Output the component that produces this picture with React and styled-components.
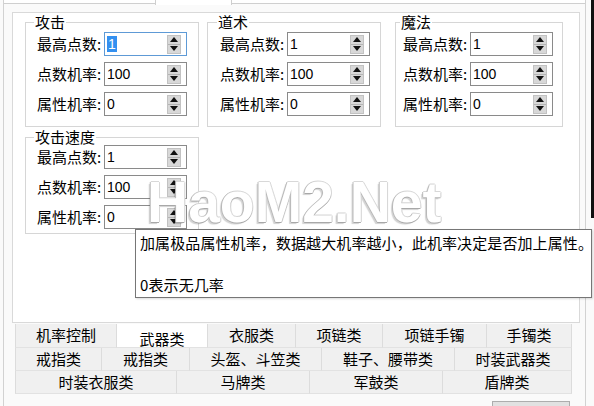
import React from 'react';
import styled, { createGlobalStyle } from 'styled-components';

const GlobalStyle = createGlobalStyle`
    html, body {
        margin: 0;
        padding: 0;
        width: 594px;
        height: 406px;
        overflow: hidden;
        background: #fafafa;
    }
    body {
        font-family: "Noto Sans CJK SC", "Liberation Sans", sans-serif;
        color: #000;
    }
`;

const Screen = styled.div`
    position: relative;
    width: 594px;
    height: 406px;
    display: flex;
    overflow: hidden;
    background: #fafafa;
`;

const Frame = styled.div`
    margin-left: 3px;
    width: 583px;
    box-sizing: border-box;
    border-left: 1px solid #d2d2d2;
    border-right: 1px solid #d2d2d2;
    display: flex;
    flex-direction: column;
    flex-shrink: 0;
    & > * {
        flex-shrink: 0;
    }
`;

const SideStrip = styled.div`
    flex: 1;
    display: flex;
    justify-content: flex-end;
    align-items: flex-start;
`;

const Dark = styled.div`
    width: 3px;
    height: 218px;
    background: #111;
`;

const TopStrip = styled.div`
    height: 12px;
    display: flex;
    align-items: flex-start;
`;

const TopLine = styled.div`
    width: ${(p) => (p.$w ? `${p.$w}px` : 'auto')};
    flex: ${(p) => (p.$w ? 'none' : '1')};
    height: 3px;
    border-bottom: 1px solid #cfcfcf;
    background: #fff;
`;

const TopNotch = styled.div`
    width: 77px;
    height: 5px;
    box-sizing: border-box;
    border-left: 1px solid #cfcfcf;
    border-right: 1px solid #cfcfcf;
    background: #fff;
`;

const Panel = styled.div`
    margin-left: 8px;
    width: 568px;
    height: 311px;
    box-sizing: border-box;
    border: 1px solid #d9d9d9;
    background: #fff;
    padding-left: 12px;
`;

const GroupRow = styled.div`
    display: flex;
    align-items: flex-start;
`;

const Group = styled.fieldset`
    margin: ${(p) => p.$mt}px 0 0 ${(p) => p.$ml}px;
    width: ${(p) => p.$w}px;
    box-sizing: border-box;
    border: 1px solid #d6d6d6;
    padding: ${(p) => p.$pt}px 0 ${(p) => p.$pb}px ${(p) => p.$pl}px;
    min-width: 0;
`;

const Legend = styled.legend`
    margin-left: -3px;
    padding: 0 1px;
    font-size: 15px;
    line-height: 16px;
`;

const Rows = styled.div`
    display: flex;
    flex-direction: column;
    gap: 6px;
`;

const Row = styled.div`
    display: flex;
    align-items: center;
    height: 24px;
`;

const Label = styled.span`
    width: 67px;
    font-size: 15px;
    line-height: 24px;
    white-space: nowrap;
`;

const Spin = styled.div`
    width: 83px;
    height: 24px;
    box-sizing: border-box;
    border: 1px solid ${(p) => (p.$focus ? '#5e9ad6' : '#8a8a8a')};
    background: #fff;
    display: flex;
    align-items: center;
    justify-content: space-between;
    padding: 0 5px 0 2px;
`;

const Value = styled.span`
    font-family: "Liberation Sans", sans-serif;
    font-size: 14px;
    line-height: 16px;
    padding: 0 ${(p) => (p.$sel ? '1px' : '0')};
    background: ${(p) => (p.$sel ? '#3390f0' : 'transparent')};
    color: ${(p) => (p.$sel ? '#fff' : '#000')};
`;

const Arrows = styled.div`
    width: 14px;
    height: 19px;
    box-sizing: border-box;
    background: #d8d8d8;
    border: 1px solid #c2c2c2;
    display: flex;
    flex-direction: column;
`;

const ArrowHalf = styled.div`
    flex: 1;
    display: flex;
    align-items: center;
    justify-content: center;
    border-bottom: ${(p) => (p.$top ? '1px solid #b4b4b4' : 'none')};
`;

const Tri = styled.span`
    width: 0;
    height: 0;
    border-left: 4px solid transparent;
    border-right: 4px solid transparent;
    ${(p) => (p.$up ? 'border-bottom: 5px solid #111;' : 'border-top: 5px solid #111;')}
`;

const Tabs = styled.div`
    margin: 1px 0 0 11px;
    width: 557px;
    display: flex;
    flex-direction: column;
`;

const TabRow = styled.div`
    display: flex;
    height: ${(p) => p.$h}px;
`;

const Tab = styled.div`
    width: ${(p) => p.$w}px;
    box-sizing: border-box;
    background: ${(p) => (p.$sel ? '#fff' : '#f0f0f0')};
    border-right: 1px solid #dcdcdc;
    border-bottom: 1px solid #e2e2e2;
    &:first-child {
        border-left: 1px solid #dcdcdc;
    }
    font-size: 15px;
    line-height: 20px;
    padding-top: ${(p) => (p.$sel ? 5 : 1)}px;
    text-align: center;
    white-space: nowrap;
`;

const Footer = styled.div`
    display: flex;
    justify-content: flex-end;
    padding: 7px 15px 0 0;
`;

const Button = styled.div`
    width: 78px;
    height: 22px;
    box-sizing: border-box;
    background: #e1e1e1;
    border: 1px solid #adadad;
`;

const Tooltip = styled.div`
    position: absolute;
    left: 135px;
    top: 229px;
    width: 457px;
    height: 69px;
    box-sizing: border-box;
    border: 1px solid #767676;
    background: #fff;
    padding: 2px 4px;
    font-size: 15px;
    line-height: 21px;
    letter-spacing: 0.1px;
    white-space: nowrap;
    box-shadow: 1px 1px 2px rgba(0, 0, 0, 0.15);
`;

const Watermark = styled.div`
    position: absolute;
    left: 147px;
    top: 168px;
    font-family: "Liberation Sans", sans-serif;
    font-weight: 700;
    font-size: 57px;
    line-height: 68px;
    color: #fff;
    pointer-events: none;
    text-shadow: -1px 0 #b9b9b9, 0 1px #a8a8a8, 1px 0 #d8d8d8, 0 -1px #d8d8d8,
        -2px 2px 1px rgba(0, 0, 0, 0.18);
`;

function SpinBox({ value, focus }) {
    return (
        <Spin $focus={focus}>
            <Value $sel={focus}>{value}</Value>
            <Arrows>
                <ArrowHalf $top>
                    <Tri $up />
                </ArrowHalf>
                <ArrowHalf>
                    <Tri />
                </ArrowHalf>
            </Arrows>
        </Spin>
    );
}

function StatGroup({ title, focus, ...rest }) {
    return (
        <Group {...rest}>
            <Legend>{title}</Legend>
            <Rows>
                <Row>
                    <Label>最高点数:</Label>
                    <SpinBox value="1" focus={focus} />
                </Row>
                <Row>
                    <Label>点数机率:</Label>
                    <SpinBox value="100" />
                </Row>
                <Row>
                    <Label>属性机率:</Label>
                    <SpinBox value="0" />
                </Row>
            </Rows>
        </Group>
    );
}

const tabRows = [
    {
        h: 24,
        tabs: [
            ['机率控制', 102],
            ['武器类', 91, true],
            ['衣服类', 88],
            ['项链类', 87],
            ['项链手镯', 104],
            ['手镯类', 85],
        ],
    },
    {
        h: 23,
        tabs: [
            ['戒指类', 87],
            ['戒指类', 88],
            ['头盔、斗笠类', 132],
            ['鞋子、腰带类', 133],
            ['时装武器类', 117],
        ],
    },
    {
        h: 23,
        tabs: [
            ['时装衣服类', 162],
            ['马牌类', 133],
            ['军鼓类', 133],
            ['盾牌类', 129],
        ],
    },
];

export default function App() {
    return (
        <>
            <GlobalStyle />
            <Screen>
                <Frame>
                    <TopStrip>
                        <TopLine $w={151} />
                        <TopNotch />
                        <TopLine />
                    </TopStrip>
                    <Panel>
                        <GroupRow>
                            <StatGroup title="攻击" focus $w={174} $ml={0} $mt={1} $pl={11} $pt={2} $pb={10} />
                            <StatGroup title="道术" $w={174} $ml={8} $mt={1} $pl={12} $pt={2} $pb={10} />
                            <StatGroup title="魔法" $w={168} $ml={14} $mt={1} $pl={7} $pt={2} $pb={10} />
                        </GroupRow>
                        <GroupRow>
                            <StatGroup title="攻击速度" $w={174} $ml={0} $mt={2} $pl={11} $pt={0} $pb={4} />
                        </GroupRow>
                    </Panel>
                    <Tabs>
                        {tabRows.map((row, i) => (
                            <TabRow key={i} $h={row.h}>
                                {row.tabs.map(([label, w, sel], j) => (
                                    <Tab key={j} $w={w} $sel={sel}>
                                        {label}
                                    </Tab>
                                ))}
                            </TabRow>
                        ))}
                    </Tabs>
                    <Footer>
                        <Button />
                    </Footer>
                </Frame>
                <SideStrip>
                    <Dark />
                </SideStrip>
                <Watermark>HaoM2.Net</Watermark>
                <Tooltip>
                    加属极品属性机率，数据越大机率越小，此机率决定是否加上属性。
                    <br />
                    <br />
                    0表示无几率
                </Tooltip>
            </Screen>
        </>
    );
}
